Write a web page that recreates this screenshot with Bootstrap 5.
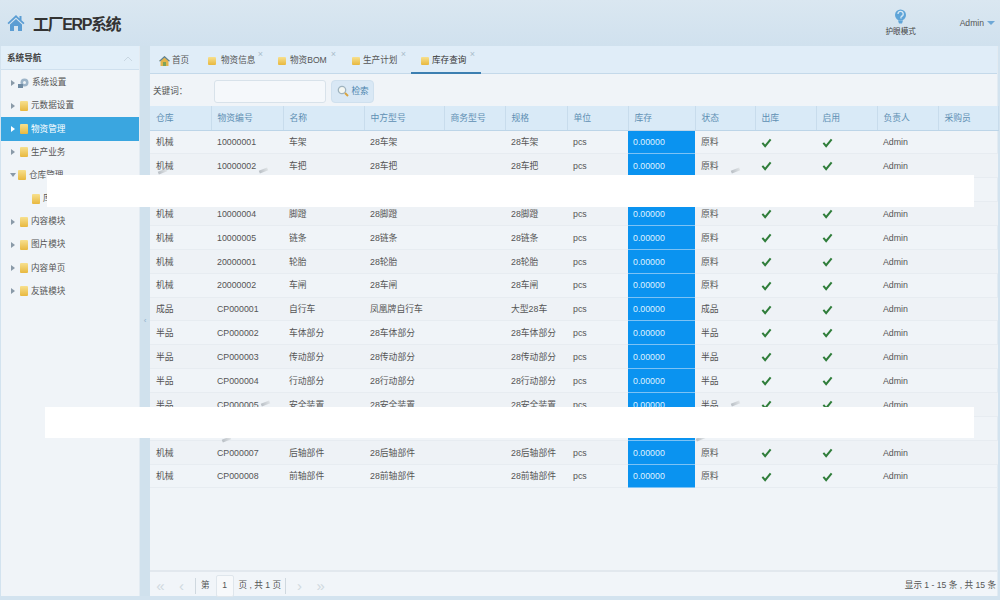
<!DOCTYPE html>
<html lang="zh">
<head>
<meta charset="utf-8">
<title>工厂ERP系统</title>
<link href="https://cdn.jsdelivr.net/npm/bootstrap@5.3.0/dist/css/bootstrap.min.css" rel="stylesheet">
<style>
html,body{width:1000px;height:600px;overflow:hidden}
body{background:#d3e3ef;font-family:"Liberation Sans","Noto Sans CJK SC",sans-serif;font-size:8.6px;color:#555;position:relative}
.top-bar{height:46px;background:linear-gradient(#dae7f1,#d0e1ee);padding:0 5px 0 7px}
.brand-name{font-size:16px;font-weight:700;color:#333;letter-spacing:-1.4px;margin-left:8px;padding-top:3px}
.eye-box{width:40px;margin-right:39px;color:#444;font-size:7.6px}
.eye-box svg{display:block;margin-bottom:2px}
.admin-box{color:#555;gap:3px}
.caret-blue{border:4px solid transparent;border-top-color:#6fa8d6;border-bottom:0}
.app-body{height:550px}
.side-pane{width:139px;margin-left:1px;background:#f0f4f8;border-right:1px solid #e3ebf2}
.side-title{height:24px;background:#e2eff9;border-bottom:1px solid #cfe0ee;padding:2px 6px 0;color:#444;font-weight:700}
.side-list{padding-top:1px}
.side-item{height:23.2px;padding:0 0 0 10px;gap:3px;background:transparent;border:0;color:#555;border-radius:0}
.side-item.on{background:#3aa6e0;color:#fff}
.side-sub{padding-left:31px}
.tri{width:0;height:0;border:3.5px solid transparent;border-left:4px solid #8a9aa8;border-right:0}
.on .tri{border-left-color:#fff}
.tri.open{border:3.5px solid transparent;border-top:4px solid #8a9aa8;border-bottom:0;margin:0 -3px 0 -1px}
.fold{width:8px;height:10px;background:linear-gradient(#f7e08e,#e8b83f);border-radius:1px;flex:none}
.tri + .fold{margin-left:2px}
.split-pane{width:10px;background:#d0e1ed;color:#8fb0c9;font-size:8px}
.main-pane{width:848px;background:#f0f4f8;border-right:1px solid #e3ebf2}
.tab-bar{height:28px;background:#e0edf8;border-bottom:1px solid #c4d9ea;padding-left:1px;flex-wrap:nowrap}
.tab-one{position:relative;height:28px;padding:3px 0 0;gap:3px;color:#555;border-bottom:2px solid transparent}
.tab-home{width:48px;padding-left:8px;gap:2px}
.tab-a{width:70px;padding-left:9px;gap:5px}
.tab-b{width:73px;padding-left:9px;gap:4px}
.tab-c{width:70px;padding-left:10px;gap:3px}
.tab-d{width:70px;padding-left:10px;gap:3px;color:#333;border-bottom-color:#3c7fb1;margin-left:-1px}
.tab-x{position:absolute;top:2px;right:6px;font-size:9px;line-height:12px;color:#a9bccb}
.tab-one .fold{width:8px;height:8px}
.tool-row{height:32px;padding:2px 3px 0;background:#f0f4f8}
.kw-label{width:61px}
.kw-input{width:112px;height:23px;background:#f5f8fb;border:1px solid #d8e2ea;border-radius:3px;padding:0 4px;font-size:9px}
.find-btn{width:43px;height:23px;margin-left:5px;padding:0 0 0 1px;gap:2px;background:#d9e8f5;border:1px solid #cfe0ee;border-radius:4px;color:#4a84ad;font-size:8.6px}
.grid-wrap{flex:1 1 auto;min-height:0}
.erp-grid{table-layout:fixed;width:848px;margin:0;font-size:8.8px;--bs-table-bg:transparent;--bs-table-color:#555;border-color:#e7ecf1}
.erp-grid th{height:24px;padding:2px 6px 0;background:#d9eaf7;color:#5e8fb3;font-weight:400;border-bottom:1px solid #bdd5e8;border-right:1px solid #c8dcec;vertical-align:middle}
.erp-grid td{height:23.87px;padding:2px 6px 0;vertical-align:middle;border-bottom:1px solid #e7ecf1;white-space:nowrap;overflow:hidden}
.erp-grid td svg{margin-bottom:2px}
.erp-grid tr:nth-child(even) td{background:#eef2f6}
.erp-grid td.qty-cell{background:#0a93f0!important;color:#dff1ff;border-bottom:1px solid #7cc2f5;padding-left:5px}
.w60{width:60px}.w61{width:61px}.w62{width:62px}.w67{width:67px}.w72{width:72px}.w81{width:81px}.w80{width:80px}
.pager-row{height:26px;border-top:2px solid #e2e8ee;padding:3px 1px 0 0;background:#f1f5f9}
.pg-ico{width:21px;color:#d0d9e0;font-size:15px;line-height:1;text-align:center}
.pg-sep{width:1px;height:16px;background:#cfd8df;margin:0 5px 0 3px}
.pg-sep.after{margin:0 3px 0 4px}
.pg-box{width:18px;height:22px;background:#f7f9fb;border:1px solid #dfe6ec;border-radius:2px;margin:0 5px 0 6px;color:#555}
.mask-one,.mask-two{position:absolute;background:#fff;z-index:5}
.mask-one{left:47px;top:175px;width:927px;height:32px}
.mask-two{left:45px;top:407px;width:929px;height:31px}
.smudge{position:absolute;width:9px;height:3px;background:linear-gradient(90deg,#b8bec4,#dfe3e6);transform:rotate(-22deg);z-index:4}
.s1{left:158px;top:170px}.s2{left:259px;top:169px}.s3{left:731px;top:169px}.s4{left:261px;top:402px}.s5{left:731px;top:402px}.s6{left:222px;top:438px}.s7{left:696px;top:437px}
</style>
</head>
<body>
<svg width="0" height="0" class="position-absolute">
<symbol id="ck" viewBox="0 0 12 12"><path d="M1.500 6.500 4.500 10 10.500 2.500" fill="none" stroke="#2f7d3a" stroke-width="2.200"/></symbol>
</svg>
<header class="top-bar d-flex align-items-center">
<svg width="18" height="18" viewBox="0 0 18 18"><path d="M9 1 0.500 9l1.200 1.200L9 3.400l7.300 6.800L17.500 9l-3-2.800V2h-2v2.400z" fill="#5b9dd3"/><path d="M3 10.500 9 5l6 5.500V17h-4v-5H7v5H3z" fill="#5b9dd3"/></svg>
<span class="brand-name">工厂ERP系统</span>
<div class="ms-auto d-flex align-items-center">
<div class="eye-box d-flex flex-column align-items-center">
<svg width="13" height="15" viewBox="0 0 13 15"><circle cx="6.500" cy="6" r="5.500" fill="#5ea4d8"/><path d="M4 5a2.600 2.600 0 1 1 3 2.500M7 7.500v2" stroke="#d6e8f4" stroke-width="1.300" fill="none"/><path d="M4 11.500h5l-1 3H5z" fill="#5ea4d8"/></svg>
<span>护眼模式</span>
</div>
<div class="admin-box d-flex align-items-center"><span>Admin</span><span class="caret-blue"></span></div>
</div>
</header>
<div class="app-body d-flex">
<aside class="side-pane">
<div class="side-title d-flex align-items-center justify-content-between"><span>系统导航</span><svg width="10" height="6" viewBox="0 0 10 6"><path d="M1 5 5 1l4 4" fill="none" stroke="#c9d7e2"/></svg></div>
<div class="list-group side-list">
<a class="list-group-item side-item d-flex align-items-center"><span class="tri"></span><svg width="11" height="10" viewBox="0 0 11 10"><circle cx="6.500" cy="4.500" r="4" fill="#9db4c8"/><circle cx="6.500" cy="4.500" r="1.500" fill="#eef3f7"/><rect x="0" y="6" width="5" height="4" fill="#6f8aa2"/></svg><span>系统设置</span></a>
<a class="list-group-item side-item d-flex align-items-center"><span class="tri"></span><span class="fold"></span><span>元数据设置</span></a>
<a class="list-group-item side-item on d-flex align-items-center"><span class="tri"></span><span class="fold"></span><span>物资管理</span></a>
<a class="list-group-item side-item d-flex align-items-center"><span class="tri"></span><span class="fold"></span><span>生产业务</span></a>
<a class="list-group-item side-item d-flex align-items-center"><span class="tri open"></span><span class="fold"></span><span>仓库管理</span></a>
<a class="list-group-item side-item side-sub d-flex align-items-center"><span class="fold"></span><span>库存查询</span></a>
<a class="list-group-item side-item d-flex align-items-center"><span class="tri"></span><span class="fold"></span><span>内容模块</span></a>
<a class="list-group-item side-item d-flex align-items-center"><span class="tri"></span><span class="fold"></span><span>图片模块</span></a>
<a class="list-group-item side-item d-flex align-items-center"><span class="tri"></span><span class="fold"></span><span>内容单页</span></a>
<a class="list-group-item side-item d-flex align-items-center"><span class="tri"></span><span class="fold"></span><span>友链模块</span></a>
</div>
</aside>
<div class="split-pane d-flex align-items-center justify-content-center"><span>‹</span></div>
<main class="main-pane d-flex flex-column">
<nav class="nav tab-bar">
<a class="nav-link tab-one tab-home d-flex align-items-center"><svg width="11" height="10" viewBox="0 0 11 10"><path d="M5.500 0 0 5h1.500v5h8V5H11z" fill="#e3b54c"/><path d="M5.500 0 0 5l1 .6 4.500-4 4.500 4L11 5z" fill="#4f7fa6"/><rect x="4" y="6" width="3" height="4" fill="#7fa35a"/></svg><span>首页</span></a>
<a class="nav-link tab-one tab-a d-flex align-items-center"><span class="fold"></span><span>物资信息</span><span class="tab-x">×</span></a>
<a class="nav-link tab-one tab-b d-flex align-items-center"><span class="fold"></span><span>物资BOM</span><span class="tab-x">×</span></a>
<a class="nav-link tab-one tab-c d-flex align-items-center"><span class="fold"></span><span>生产计划</span><span class="tab-x">×</span></a>
<a class="nav-link tab-one tab-d d-flex align-items-center"><span class="fold"></span><span>库存查询</span><span class="tab-x">×</span></a>
</nav>
<div class="tool-row d-flex align-items-center">
<label class="kw-label" for="kw">关键词：</label>
<input id="kw" class="kw-input" type="text">
<button type="button" class="btn find-btn d-flex align-items-center justify-content-center"><svg width="12" height="12" viewBox="0 0 12 12"><circle cx="5" cy="5" r="3.700" fill="#f4f7f2" stroke="#9fb3bf" stroke-width="1.300"/><path d="M8 8l3 3" stroke="#d9a441" stroke-width="2"/></svg><span>检索</span></button>
</div>
<div class="grid-wrap">
<table class="table erp-grid">
<thead><tr><th class="w61">仓库</th><th class="w72">物资编号</th><th class="w81">名称</th><th class="w80">中方型号</th><th class="w61">商务型号</th><th class="w62">规格</th><th class="w61">单位</th><th class="w67">库存</th><th class="w60">状态</th><th class="w61">出库</th><th class="w61">启用</th><th class="w61">负责人</th><th class="w60">采购员</th></tr></thead>
<tbody>
<tr><td>机械</td><td>10000001</td><td>车架</td><td>28车架</td><td></td><td>28车架</td><td>pcs</td><td class="qty-cell">0.00000</td><td>原料</td><td><svg width="11" height="11"><use href="#ck"/></svg></td><td><svg width="11" height="11"><use href="#ck"/></svg></td><td>Admin</td><td></td></tr>
<tr><td>机械</td><td>10000002</td><td>车把</td><td>28车把</td><td></td><td>28车把</td><td>pcs</td><td class="qty-cell">0.00000</td><td>原料</td><td><svg width="11" height="11"><use href="#ck"/></svg></td><td><svg width="11" height="11"><use href="#ck"/></svg></td><td>Admin</td><td></td></tr>
<tr><td></td><td></td><td></td><td></td><td></td><td></td><td></td><td class="qty-cell"></td><td></td><td></td><td></td><td></td><td></td></tr>
<tr><td>机械</td><td>10000004</td><td>脚蹬</td><td>28脚蹬</td><td></td><td>28脚蹬</td><td>pcs</td><td class="qty-cell">0.00000</td><td>原料</td><td><svg width="11" height="11"><use href="#ck"/></svg></td><td><svg width="11" height="11"><use href="#ck"/></svg></td><td>Admin</td><td></td></tr>
<tr><td>机械</td><td>10000005</td><td>链条</td><td>28链条</td><td></td><td>28链条</td><td>pcs</td><td class="qty-cell">0.00000</td><td>原料</td><td><svg width="11" height="11"><use href="#ck"/></svg></td><td><svg width="11" height="11"><use href="#ck"/></svg></td><td>Admin</td><td></td></tr>
<tr><td>机械</td><td>20000001</td><td>轮胎</td><td>28轮胎</td><td></td><td>28轮胎</td><td>pcs</td><td class="qty-cell">0.00000</td><td>原料</td><td><svg width="11" height="11"><use href="#ck"/></svg></td><td><svg width="11" height="11"><use href="#ck"/></svg></td><td>Admin</td><td></td></tr>
<tr><td>机械</td><td>20000002</td><td>车闸</td><td>28车闸</td><td></td><td>28车闸</td><td>pcs</td><td class="qty-cell">0.00000</td><td>原料</td><td><svg width="11" height="11"><use href="#ck"/></svg></td><td><svg width="11" height="11"><use href="#ck"/></svg></td><td>Admin</td><td></td></tr>
<tr><td>成品</td><td>CP000001</td><td>自行车</td><td>凤凰牌自行车</td><td></td><td>大型28车</td><td>pcs</td><td class="qty-cell">0.00000</td><td>成品</td><td><svg width="11" height="11"><use href="#ck"/></svg></td><td><svg width="11" height="11"><use href="#ck"/></svg></td><td>Admin</td><td></td></tr>
<tr><td>半品</td><td>CP000002</td><td>车体部分</td><td>28车体部分</td><td></td><td>28车体部分</td><td>pcs</td><td class="qty-cell">0.00000</td><td>半品</td><td><svg width="11" height="11"><use href="#ck"/></svg></td><td><svg width="11" height="11"><use href="#ck"/></svg></td><td>Admin</td><td></td></tr>
<tr><td>半品</td><td>CP000003</td><td>传动部分</td><td>28传动部分</td><td></td><td>28传动部分</td><td>pcs</td><td class="qty-cell">0.00000</td><td>半品</td><td><svg width="11" height="11"><use href="#ck"/></svg></td><td><svg width="11" height="11"><use href="#ck"/></svg></td><td>Admin</td><td></td></tr>
<tr><td>半品</td><td>CP000004</td><td>行动部分</td><td>28行动部分</td><td></td><td>28行动部分</td><td>pcs</td><td class="qty-cell">0.00000</td><td>半品</td><td><svg width="11" height="11"><use href="#ck"/></svg></td><td><svg width="11" height="11"><use href="#ck"/></svg></td><td>Admin</td><td></td></tr>
<tr><td>半品</td><td>CP000005</td><td>安全装置</td><td>28安全装置</td><td></td><td>28安全装置</td><td>pcs</td><td class="qty-cell">0.00000</td><td>半品</td><td><svg width="11" height="11"><use href="#ck"/></svg></td><td><svg width="11" height="11"><use href="#ck"/></svg></td><td>Admin</td><td></td></tr>
<tr><td></td><td></td><td></td><td></td><td></td><td></td><td></td><td class="qty-cell"></td><td></td><td></td><td></td><td></td><td></td></tr>
<tr><td>机械</td><td>CP000007</td><td>后轴部件</td><td>28后轴部件</td><td></td><td>28后轴部件</td><td>pcs</td><td class="qty-cell">0.00000</td><td>原料</td><td><svg width="11" height="11"><use href="#ck"/></svg></td><td><svg width="11" height="11"><use href="#ck"/></svg></td><td>Admin</td><td></td></tr>
<tr><td>机械</td><td>CP000008</td><td>前轴部件</td><td>28前轴部件</td><td></td><td>28前轴部件</td><td>pcs</td><td class="qty-cell">0.00000</td><td>原料</td><td><svg width="11" height="11"><use href="#ck"/></svg></td><td><svg width="11" height="11"><use href="#ck"/></svg></td><td>Admin</td><td></td></tr>
</tbody>
</table>
</div>
<footer class="pager-row d-flex align-items-center">
<span class="pg-ico">«</span><span class="pg-ico">‹</span><span class="pg-sep"></span><span>第</span><span class="pg-box d-flex align-items-center justify-content-center">1</span><span>页 , 共 1 页</span><span class="pg-sep after"></span><span class="pg-ico">›</span><span class="pg-ico">»</span>
<span class="ms-auto">显示 1 - 15 条 , 共 15 条</span>
</footer>
</main>
</div>
<div class="mask-one"></div>
<div class="mask-two"></div>
<i class="smudge s1"></i><i class="smudge s2"></i><i class="smudge s3"></i><i class="smudge s4"></i><i class="smudge s5"></i><i class="smudge s6"></i><i class="smudge s7"></i>
<script src="https://cdn.jsdelivr.net/npm/bootstrap@5.3.0/dist/js/bootstrap.bundle.min.js"></script>
</body>
</html>
